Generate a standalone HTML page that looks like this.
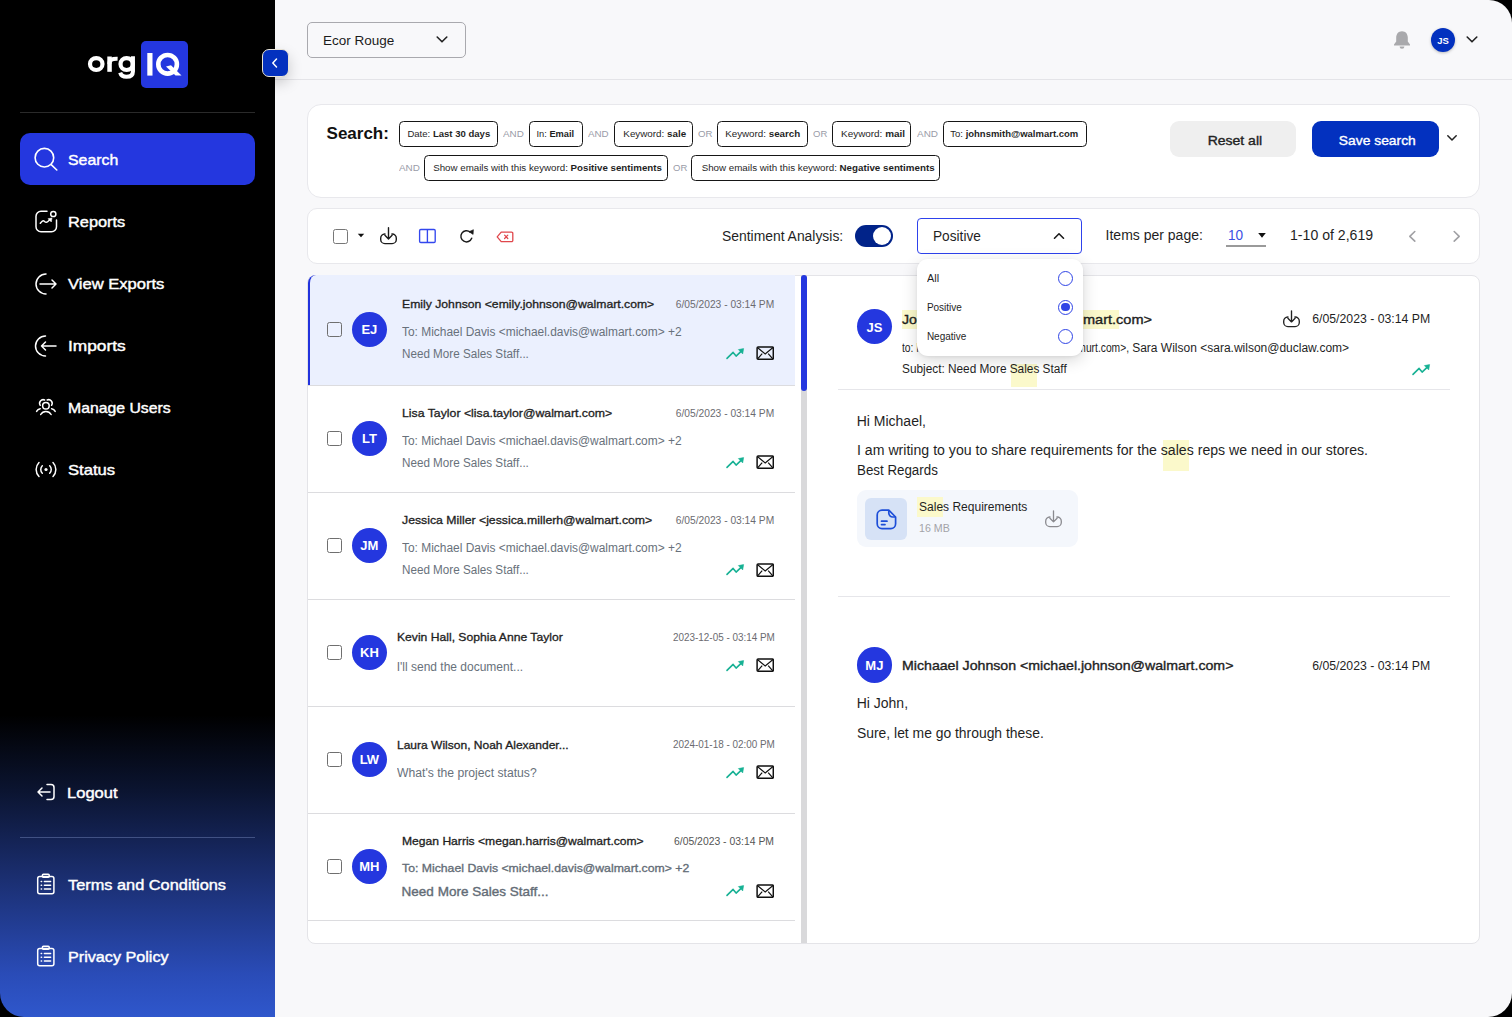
<!DOCTYPE html><html><head><meta charset="utf-8"><style>
*{margin:0;padding:0;box-sizing:border-box}
html,body{width:1512px;height:1017px;overflow:hidden;background:#000}
body{position:relative;font-family:"Liberation Sans",sans-serif}
.t{position:absolute;line-height:0;white-space:nowrap}
</style></head><body><div style="position:absolute;left:0px;top:0px;width:275px;height:1017px;background:linear-gradient(180deg,#000 0px,#000 715px,#0b1430 790px,#1b2f72 880px,#2a4cb8 975px,#2f57cc 1017px);border-bottom-left-radius:24px"></div><div style="position:absolute;left:275px;top:0px;width:1237px;height:1017px;background:#F8F8FA;border-top-right-radius:23px;border-bottom-right-radius:24px"></div><svg style="position:absolute;left:84px;top:50px;" width="56" height="32" viewBox="0 0 56 32" fill="none"><ellipse cx="12.25" cy="14.05" rx="6.25" ry="5.95" stroke="#fff" stroke-width="4.2"/><rect x="23.3" y="6.5" width="4.5" height="15.3" fill="#fff"/><path d="M25.4 14 C25.4 9.6 28 8.6 33.6 8.8" stroke="#fff" stroke-width="4"/><ellipse cx="42.6" cy="14.05" rx="6.1" ry="5.95" stroke="#fff" stroke-width="4.2"/><path d="M48.9 6.3 V21.5 C48.9 25.3 46.2 26.8 42.4 26.8 C39.2 26.8 37 25.4 36.2 22.6" stroke="#fff" stroke-width="4.1"/></svg><div style="position:absolute;left:141px;top:41px;width:47px;height:46.5px;background:#2437DF;border-radius:5px"></div><svg style="position:absolute;left:141px;top:41px;" width="47" height="47" viewBox="0 0 47 47" fill="none"><rect x="6.3" y="12" width="5.2" height="22.6" fill="#fff"/><circle cx="26.6" cy="23.3" r="9.3" stroke="#fff" stroke-width="4.6"/><path d="M25 25.5 L34.5 34.6 H40.5 L30 24.3 Z" fill="#fff"/></svg><div style="position:absolute;left:20px;top:112px;width:235px;height:1px;background:#2a2a2a"></div><div style="position:absolute;left:20px;top:133px;width:235px;height:52px;background:#2437DF;border-radius:10px"></div><svg style="position:absolute;left:33px;top:146px;" width="26" height="26" viewBox="0 0 26 26" fill="none"><circle cx="11.4" cy="11.7" r="9.3" stroke="#fff" stroke-width="1.6"/><path d="M18.2 18.6 L23.8 24" stroke="#fff" stroke-width="1.6" stroke-linecap="round"/></svg><div class="t" style="top:160.00px;font-size:15px;font-weight:400;color:#fff;-webkit-text-stroke:0.42px #fff;left:67.75px;transform-origin:0 0;transform:scaleX(1.0580);">Search</div><svg style="position:absolute;left:34px;top:209px;" width="24" height="24" viewBox="0 0 24 24" fill="none"><path d="M13 2.2 H7 A5 5 0 0 0 2 7.2 V17.7 A5 5 0 0 0 7 22.7 H17.5 A5 5 0 0 0 22.5 17.7 V11" stroke="#fff" stroke-width="1.5" stroke-linecap="round" stroke-linejoin="round"/><circle cx="19.3" cy="5" r="2.6" stroke="#fff" stroke-width="1.5" stroke-linecap="round" stroke-linejoin="round"/><path d="M6.3 14.3 C7.8 12.3 9 11.2 10.2 12.2 C11.4 13.3 12.2 14 13.6 12.8 L16.4 10.3" stroke="#fff" stroke-width="1.5" stroke-linecap="round" stroke-linejoin="round"/><path d="M18 9 L14 9.7 L17.3 13 Z" fill="#fff" stroke="#fff" stroke-width="0.5" stroke-linejoin="round"/></svg><div class="t" style="top:222.00px;font-size:15px;font-weight:400;color:#fff;-webkit-text-stroke:0.42px #fff;left:67.65px;transform-origin:0 0;transform:scaleX(1.0895);">Reports</div><svg style="position:absolute;left:34px;top:272px;" width="24" height="24" viewBox="0 0 24 24" fill="none"><path d="M12 2 A10 10 0 1 0 12 22" stroke="#fff" stroke-width="1.5" stroke-linecap="round" stroke-linejoin="round"/><path d="M6 12 H22 M18 8 L22 12 L18 16" stroke="#fff" stroke-width="1.5" stroke-linecap="round" stroke-linejoin="round"/></svg><div class="t" style="top:284.00px;font-size:15px;font-weight:400;color:#fff;-webkit-text-stroke:0.42px #fff;left:67.65px;transform-origin:0 0;transform:scaleX(1.1042);">View Exports</div><svg style="position:absolute;left:34px;top:334px;" width="24" height="24" viewBox="0 0 24 24" fill="none"><path d="M11.5 2 A10 10 0 1 0 11.5 22" stroke="#fff" stroke-width="1.5" stroke-linecap="round" stroke-linejoin="round"/><path d="M22 12 H7.5 M11.5 8 L7.5 12 L11.5 16" stroke="#fff" stroke-width="1.5" stroke-linecap="round" stroke-linejoin="round"/></svg><div class="t" style="top:346.00px;font-size:15px;font-weight:400;color:#fff;-webkit-text-stroke:0.42px #fff;left:67.65px;transform-origin:0 0;transform:scaleX(1.1543);">Imports</div><svg style="position:absolute;left:34px;top:397px;" width="24" height="22" viewBox="0 0 24 22" fill="none"><circle cx="11.9" cy="8.7" r="3.3" stroke="#fff" stroke-width="1.5" stroke-linecap="round" stroke-linejoin="round"/><path d="M6.22 8.31 A3.6 3.6 0 0 1 10.66 3.01 M17.58 8.31 A3.6 3.6 0 0 0 13.14 3.01 M6.7 17.5 A6 6 0 0 1 17.1 17.5 M2.6 14.4 A5 5 0 0 1 6.2 11.7 M21.2 14.4 A5 5 0 0 0 17.6 11.7" stroke="#fff" stroke-width="1.5" stroke-linecap="round" stroke-linejoin="round"/></svg><div class="t" style="top:408.00px;font-size:15px;font-weight:400;color:#fff;-webkit-text-stroke:0.42px #fff;left:67.65px;transform-origin:0 0;transform:scaleX(1.0516);">Manage Users</div><svg style="position:absolute;left:34px;top:459px;" width="24" height="22" viewBox="0 0 24 22" fill="none"><circle cx="12" cy="10.5" r="1.6" fill="#fff"/><path d="M8.3 6.8 A5.2 5.2 0 0 0 8.3 14.2 M15.7 6.8 A5.2 5.2 0 0 1 15.7 14.2" stroke="#fff" stroke-width="1.5" stroke-linecap="round" stroke-linejoin="round"/><path d="M5 3.5 A10 10 0 0 0 5 17.5 M19 3.5 A10 10 0 0 1 19 17.5" stroke="#fff" stroke-width="1.5" stroke-linecap="round" stroke-linejoin="round"/></svg><div class="t" style="top:470.00px;font-size:15px;font-weight:400;color:#fff;-webkit-text-stroke:0.42px #fff;left:67.65px;transform-origin:0 0;transform:scaleX(1.1089);">Status</div><svg style="position:absolute;left:34px;top:781px;" width="24" height="22" viewBox="0 0 24 22" fill="none"><path d="M13 3.5 H17 A3 3 0 0 1 20 6.5 V15.5 A3 3 0 0 1 17 18.5 H13" stroke="#fff" stroke-width="1.5" stroke-linecap="round" stroke-linejoin="round"/><path d="M16 11 H4 M8 7 L4 11 L8 15" stroke="#fff" stroke-width="1.5" stroke-linecap="round" stroke-linejoin="round"/></svg><div class="t" style="top:793.00px;font-size:15px;font-weight:400;color:#fff;-webkit-text-stroke:0.42px #fff;left:67.35px;transform-origin:0 0;transform:scaleX(1.1038);">Logout</div><div style="position:absolute;left:20px;top:837px;width:235px;height:1px;background:rgba(120,140,190,0.45)"></div><svg style="position:absolute;left:36px;top:873px;" width="21" height="23" viewBox="0 0 21 23" fill="none"><rect x="1.7" y="3.4" width="16.2" height="17.4" rx="2" stroke="#fff" stroke-width="1.5" stroke-linecap="round" stroke-linejoin="round"/><rect x="6.4" y="1.3" width="6.8" height="3" rx="1" stroke="#fff" stroke-width="1.5" stroke-linecap="round" stroke-linejoin="round"/><path d="M5.2 8.6 H5.6 M8.4 8.6 H14.6 M5.2 12.3 H5.6 M8.4 12.3 H14.6 M5.2 16 H5.6 M8.4 16 H14.6" stroke="#fff" stroke-width="1.5" stroke-linecap="round" stroke-linejoin="round"/></svg><div class="t" style="top:885.00px;font-size:15px;font-weight:400;color:#fff;-webkit-text-stroke:0.42px #fff;left:67.95px;transform-origin:0 0;transform:scaleX(1.0893);">Terms and Conditions</div><svg style="position:absolute;left:36px;top:945px;" width="21" height="23" viewBox="0 0 21 23" fill="none"><rect x="1.7" y="3.4" width="16.2" height="17.4" rx="2" stroke="#fff" stroke-width="1.5" stroke-linecap="round" stroke-linejoin="round"/><rect x="6.4" y="1.3" width="6.8" height="3" rx="1" stroke="#fff" stroke-width="1.5" stroke-linecap="round" stroke-linejoin="round"/><path d="M5.2 8.6 H5.6 M8.4 8.6 H14.6 M5.2 12.3 H5.6 M8.4 12.3 H14.6 M5.2 16 H5.6 M8.4 16 H14.6" stroke="#fff" stroke-width="1.5" stroke-linecap="round" stroke-linejoin="round"/></svg><div class="t" style="top:957.00px;font-size:15px;font-weight:400;color:#fff;-webkit-text-stroke:0.42px #fff;left:67.95px;transform-origin:0 0;transform:scaleX(1.0777);">Privacy Policy</div><div style="position:absolute;left:275px;top:79px;width:1237px;height:1px;background:#E4E4E8"></div><div style="position:absolute;left:307px;top:22px;width:159px;height:36px;border:1px solid #A9A9AE;border-radius:5px;background:#F8F8FA"></div><div class="t" style="top:41.00px;font-size:13.5px;font-weight:400;color:#1b1b1b;left:323.02px;transform-origin:0 0;">Ecor Rouge</div><svg style="position:absolute;left:435px;top:34px;" width="14" height="10" viewBox="0 0 14 10" fill="none"><path d="M2.2 3 L7 7.8 L11.8 3" stroke="#222" stroke-width="1.6" stroke-linecap="round" stroke-linejoin="round"/></svg><div style="position:absolute;left:261.5px;top:49px;width:27px;height:28px;border-radius:7px;background:#0331BF;border:1px solid #e9e4d6;box-shadow:0 6px 14px rgba(0,0,0,0.18)"></div><svg style="position:absolute;left:268px;top:55px;" width="14" height="16" viewBox="0 0 14 16" fill="none"><path d="M8.5 4 L4.8 8 L8.5 12" stroke="#fff" stroke-width="1.5" stroke-linecap="round" stroke-linejoin="round"/></svg><svg style="position:absolute;left:1392px;top:29px;" width="20" height="22" viewBox="0 0 20 22" fill="none"><path d="M10 2.2 C6.3 2.2 4.2 5 4.2 8.6 V12.6 L2 15.6 V16.6 H18 V15.6 L15.8 12.6 V8.6 C15.8 5 13.7 2.2 10 2.2 Z" fill="#A9A9AC"/><path d="M7.6 17.4 A2.4 2.4 0 0 0 12.4 17.4 Z" fill="#A9A9AC"/></svg><div style="position:absolute;left:1431px;top:28px;width:24px;height:24px;border-radius:50%;background:#0331BF;box-shadow:0 1px 3px rgba(0,0,0,0.25)"></div><div class="t" style="top:41.00px;font-size:9.5px;font-weight:700;color:#fff;left:1443.00px;transform-origin:0 0;transform:translateX(-50%) ;">JS</div><svg style="position:absolute;left:1465px;top:34px;" width="14" height="10" viewBox="0 0 14 10" fill="none"><path d="M2.2 3 L7 7.8 L11.8 3" stroke="#222" stroke-width="1.6" stroke-linecap="round" stroke-linejoin="round"/></svg><div style="position:absolute;left:307px;top:104px;width:1172.5px;height:94px;background:#fff;border:1px solid #E8E8EC;border-radius:14px"></div><div class="t" style="top:134.00px;font-size:17px;font-weight:700;color:#111;left:326.55px;transform-origin:0 0;">Search:</div><div style="position:absolute;left:399.4px;top:121.2px;width:98.40000000000003px;height:25.5px;border:1.2px solid #161616;border-radius:4.5px;background:#fff"></div><div class="t" style="top:134.00px;font-size:9.6px;font-weight:400;color:#1f1f1f;left:448.60px;transform-origin:0 0;transform:translateX(-50%) scaleX(0.9956);">Date: <b>Last 30 days</b></div><div class="t" style="top:134.00px;font-size:9.6px;font-weight:400;color:#9A9CA8;left:503.02px;transform-origin:0 0;transform:scaleX(1.0256);">AND</div><div style="position:absolute;left:529.4px;top:121.2px;width:53.200000000000045px;height:25.5px;border:1.2px solid #161616;border-radius:4.5px;background:#fff"></div><div class="t" style="top:134.00px;font-size:9.6px;font-weight:400;color:#1f1f1f;left:556.00px;transform-origin:0 0;transform:translateX(-50%) scaleX(0.9660);">In: <b>Email</b></div><div class="t" style="top:134.00px;font-size:9.6px;font-weight:400;color:#9A9CA8;left:587.82px;transform-origin:0 0;transform:scaleX(1.0204);">AND</div><div style="position:absolute;left:614.4px;top:121.2px;width:78.39999999999998px;height:25.5px;border:1.2px solid #161616;border-radius:4.5px;background:#fff"></div><div class="t" style="top:134.00px;font-size:9.6px;font-weight:400;color:#1f1f1f;left:653.60px;transform-origin:0 0;transform:translateX(-50%) scaleX(1.0248);">Keyword: <b>sale</b></div><div class="t" style="top:134.00px;font-size:9.6px;font-weight:400;color:#9A9CA8;left:697.52px;transform-origin:0 0;transform:scaleX(1.0052);">OR</div><div style="position:absolute;left:717.1px;top:121.2px;width:90.60000000000002px;height:25.5px;border:1.2px solid #161616;border-radius:4.5px;background:#fff"></div><div class="t" style="top:134.00px;font-size:9.6px;font-weight:400;color:#1f1f1f;left:762.40px;transform-origin:0 0;transform:translateX(-50%) scaleX(1.0200);">Keyword: <b>search</b></div><div class="t" style="top:134.00px;font-size:9.6px;font-weight:400;color:#9A9CA8;left:812.52px;transform-origin:0 0;transform:scaleX(0.9903);">OR</div><div style="position:absolute;left:832.1px;top:121.2px;width:79.39999999999998px;height:25.5px;border:1.2px solid #161616;border-radius:4.5px;background:#fff"></div><div class="t" style="top:134.00px;font-size:9.6px;font-weight:400;color:#1f1f1f;left:871.80px;transform-origin:0 0;transform:translateX(-50%) scaleX(1.0326);">Keyword: <b>mail</b></div><div class="t" style="top:134.00px;font-size:9.6px;font-weight:400;color:#9A9CA8;left:916.52px;transform-origin:0 0;transform:scaleX(1.0360);">AND</div><div style="position:absolute;left:943.3px;top:121.2px;width:143.4000000000001px;height:25.5px;border:1.2px solid #161616;border-radius:4.5px;background:#fff"></div><div class="t" style="top:134.00px;font-size:9.6px;font-weight:400;color:#1f1f1f;left:1015.00px;transform-origin:0 0;transform:translateX(-50%) scaleX(0.9887);">To: <b>johnsmith@walmart.com</b></div><div class="t" style="top:168.00px;font-size:9.6px;font-weight:400;color:#9A9CA8;left:398.72px;transform-origin:0 0;transform:scaleX(1.0308);">AND</div><div style="position:absolute;left:424.2px;top:155.1px;width:244.2px;height:25.5px;border:1.2px solid #161616;border-radius:4.5px;background:#fff"></div><div class="t" style="top:168.00px;font-size:9.6px;font-weight:400;color:#1f1f1f;left:546.30px;transform-origin:0 0;transform:translateX(-50%) scaleX(1.0139);">Show emails with this keyword: <b>Positive sentiments</b></div><div class="t" style="top:168.00px;font-size:9.6px;font-weight:400;color:#9A9CA8;left:672.52px;transform-origin:0 0;transform:scaleX(0.9903);">OR</div><div style="position:absolute;left:691.3px;top:155.1px;width:248.5px;height:25.5px;border:1.2px solid #161616;border-radius:4.5px;background:#fff"></div><div class="t" style="top:168.00px;font-size:9.6px;font-weight:400;color:#1f1f1f;left:815.55px;transform-origin:0 0;transform:translateX(-50%) scaleX(1.0185);">Show emails with this keyword: <b>Negative sentiments</b></div><div style="position:absolute;left:1170.2px;top:121px;width:126.3px;height:35.6px;background:#EFEFEF;border-radius:9px"></div><div class="t" style="top:141.00px;font-size:13px;font-weight:400;color:#222;-webkit-text-stroke:0.36px #222;left:1233.40px;transform-origin:0 0;transform:translateX(-50%) scaleX(1.0755);">Reset all</div><div style="position:absolute;left:1312px;top:121px;width:127px;height:35.6px;background:#0331BF;border-radius:9px"></div><div class="t" style="top:141.00px;font-size:13px;font-weight:400;color:#fff;-webkit-text-stroke:0.36px #fff;left:1375.20px;transform-origin:0 0;transform:translateX(-50%) scaleX(1.0639);">Save search</div><svg style="position:absolute;left:1445px;top:132px;" width="14" height="12" viewBox="0 0 14 12" fill="none"><path d="M2.8 3.8 L7 8 L11.2 3.8" stroke="#222" stroke-width="1.5" stroke-linecap="round" stroke-linejoin="round"/></svg><div style="position:absolute;left:307px;top:208.4px;width:1172.5px;height:55.6px;background:#fff;border:1px solid #E8E8EC;border-radius:10px"></div><div style="position:absolute;left:333.2px;top:228.9px;width:14.8px;height:14.8px;border:1.3px solid #777;border-radius:2.5px"></div><svg style="position:absolute;left:357px;top:233px;" width="8" height="5" viewBox="0 0 8 5" fill="none"><path d="M0.8 0.8 H7.2 L4 4.3 Z" fill="#111"/></svg><svg style="position:absolute;left:378px;top:226px;" width="20" height="20" viewBox="0 0 20 20" fill="none"><path d="M10.5 1.8 V12.8 M6.9 9.3 L10.5 12.9 L14.1 9.3" stroke="#1a1a1a" stroke-width="1.4" stroke-linecap="round" stroke-linejoin="round"/><path d="M7 8 H6.8 A4.2 4.2 0 0 0 2.7 12.2 V13.4 A4.2 4.2 0 0 0 6.9 17.6 H14.1 A4.2 4.2 0 0 0 18.3 13.4 V12.2 A4.2 4.2 0 0 0 14.1 8 H13.9" stroke="#1a1a1a" stroke-width="1.4" stroke-linecap="round"/></svg><svg style="position:absolute;left:418px;top:228px;" width="19" height="16" viewBox="0 0 19 16" fill="none"><rect x="1.6" y="1.5" width="15.6" height="13" rx="1.2" stroke="#3347EE" stroke-width="1.35"/><path d="M9.4 1.5 V14.5" stroke="#3347EE" stroke-width="1.35"/></svg><svg style="position:absolute;left:458px;top:228px;" width="17" height="16" viewBox="0 0 17 16" fill="none"><path d="M13.7 10.3 A5.6 5.6 0 1 1 12.2 4.1" stroke="#1a1a1a" stroke-width="1.45" stroke-linecap="round"/><path d="M11 3.7 L15.4 1.7 L15.1 6.4 Z" fill="#1a1a1a" stroke="#1a1a1a" stroke-width="0.6" stroke-linejoin="round"/></svg><svg style="position:absolute;left:496px;top:231px;" width="18" height="12" viewBox="0 0 18 12" fill="none"><path d="M5.2 1.2 H15.6 A1.2 1.2 0 0 1 16.8 2.4 V9.4 A1.2 1.2 0 0 1 15.6 10.6 H5.2 L1.2 5.9 Z" stroke="#E0474C" stroke-width="1.3" stroke-linejoin="round"/><path d="M8.6 4.1 L11.8 7.5 M11.8 4.1 L8.6 7.5" stroke="#E0474C" stroke-width="1.25" stroke-linecap="round"/></svg><div class="t" style="top:236.00px;font-size:14px;font-weight:400;color:#1f1f1f;left:721.90px;transform-origin:0 0;transform:scaleX(0.9920);">Sentiment Analysis:</div><div style="position:absolute;left:855.3px;top:225px;width:37.4px;height:22px;background:#012389;border-radius:11px"></div><div style="position:absolute;left:872.8px;top:226.9px;width:18.2px;height:18.2px;background:#fff;border-radius:50%"></div><div style="position:absolute;left:917.3px;top:218.3px;width:165.2px;height:35.8px;border:1.6px solid #2E42EC;border-radius:4px;background:#fff"></div><div class="t" style="top:236.00px;font-size:14px;font-weight:400;color:#1f1f1f;left:933.00px;transform-origin:0 0;transform:scaleX(0.9762);">Positive</div><svg style="position:absolute;left:1052px;top:231px;" width="14" height="10" viewBox="0 0 14 10" fill="none"><path d="M2.5 7.2 L7 2.8 L11.5 7.2" stroke="#1a1a1a" stroke-width="1.6" stroke-linecap="round" stroke-linejoin="round"/></svg><div class="t" style="top:235.00px;font-size:14px;font-weight:400;color:#1f1f1f;left:1105.60px;transform-origin:0 0;">Items per page:</div><div class="t" style="top:235.00px;font-size:14px;font-weight:400;color:#3B4FE4;left:1228.30px;transform-origin:0 0;transform:scaleX(0.9733);">10</div><svg style="position:absolute;left:1257px;top:232px;" width="10" height="7" viewBox="0 0 10 7" fill="none"><path d="M1.2 1 H8.8 L5 5.8 Z" fill="#111"/></svg><div style="position:absolute;left:1225.7px;top:245.2px;width:40.2px;height:1.5px;background:#9a9a9a"></div><div class="t" style="top:235.00px;font-size:14px;font-weight:400;color:#1f1f1f;left:1289.80px;transform-origin:0 0;transform:scaleX(1.0072);">1-10 of 2,619</div><svg style="position:absolute;left:1405px;top:229px;" width="14" height="15" viewBox="0 0 14 15" fill="none"><path d="M9.8 2.5 L4.8 7.3 L9.8 12.1" stroke="#A0A0A4" stroke-width="1.6" stroke-linecap="round" stroke-linejoin="round"/></svg><svg style="position:absolute;left:1450px;top:229px;" width="14" height="15" viewBox="0 0 14 15" fill="none"><path d="M4.2 2.5 L9.2 7.3 L4.2 12.1" stroke="#A0A0A4" stroke-width="1.6" stroke-linecap="round" stroke-linejoin="round"/></svg><div style="position:absolute;left:307px;top:274.8px;width:1172.5px;height:669px;background:#fff;border:1px solid #E4E4E8;border-radius:8px"></div><div style="position:absolute;left:307.5px;top:275px;width:487.5px;height:110.5px;background:#EBF0FE;border-top-left-radius:8px;border-left:2.6px solid #2233DD"></div><div style="position:absolute;left:308px;top:385.0px;width:487px;height:1.2px;background:#DCDCDF"></div><div style="position:absolute;left:308px;top:491.9px;width:487px;height:1.2px;background:#DCDCDF"></div><div style="position:absolute;left:308px;top:598.9px;width:487px;height:1.2px;background:#DCDCDF"></div><div style="position:absolute;left:308px;top:706.1px;width:487px;height:1.2px;background:#DCDCDF"></div><div style="position:absolute;left:308px;top:812.7px;width:487px;height:1.2px;background:#DCDCDF"></div><div style="position:absolute;left:308px;top:919.5px;width:487px;height:1.2px;background:#DCDCDF"></div><div style="position:absolute;left:801px;top:275px;width:6.2px;height:668px;background:#D9D9DB"></div><div style="position:absolute;left:801px;top:275px;width:6.2px;height:116px;background:#2437DF;border-radius:3px"></div><div style="position:absolute;left:327px;top:322px;width:14.8px;height:14.8px;border:1.3px solid #6f6f6f;border-radius:2.5px"></div><div style="position:absolute;left:351.79999999999995px;top:311.7px;width:35.2px;height:35.2px;background:#2437DF;border-radius:50%"></div><div class="t" style="top:330.00px;font-size:13px;font-weight:700;color:#fff;left:369.40px;transform-origin:0 0;transform:translateX(-50%) ;">EJ</div><div class="t" style="top:304.00px;font-size:11.5px;font-weight:400;color:#1f1f1f;-webkit-text-stroke:0.32px #1f1f1f;left:401.73px;transform-origin:0 0;transform:scaleX(1.0609);">Emily Johnson &lt;emily.johnson@walmart.com&gt;</div><div class="t" style="top:305.00px;font-size:10px;font-weight:400;color:#6b6b70;right:737.60px;transform-origin:100% 0;transform:scaleX(1.0232);">6/05/2023 - 03:14 PM</div><div class="t" style="top:332.00px;font-size:12px;font-weight:400;color:#68717B;left:401.70px;transform-origin:0 0;transform:scaleX(0.9939);">To: Michael Davis &lt;michael.davis@walmart.com&gt; +2</div><div class="t" style="top:354.00px;font-size:12px;font-weight:400;color:#68717B;left:401.70px;transform-origin:0 0;transform:scaleX(0.9720);">Need More Sales Staff...</div><svg style="position:absolute;left:725px;top:347px;" width="20" height="14" viewBox="0 0 20 14" fill="none"><path d="M2 11.4 L8.1 5.4 L11.1 9.1 L16.6 3.9" stroke="#17B194" stroke-width="1.6" stroke-linecap="round" stroke-linejoin="round"/><path d="M18.6 1.6 L13.4 2.6 L17.7 6.9 Z" fill="#17B194" stroke="#17B194" stroke-width="0.6" stroke-linejoin="round"/></svg><svg style="position:absolute;left:755.6px;top:346.3px;" width="18.4" height="14.4" viewBox="0 0 18.4 14.4" fill="none"><rect x="1.1" y="1.1" width="16.2" height="12.2" rx="1" stroke="#111" stroke-width="1.5"/><path d="M1.4 1.5 L9.2 7.9 L17 1.5 M1.6 12.8 L6.2 7.6 M16.8 12.8 L12.2 7.6" stroke="#111" stroke-width="1.2"/></svg><div style="position:absolute;left:327px;top:431px;width:14.8px;height:14.8px;border:1.3px solid #6f6f6f;border-radius:2.5px"></div><div style="position:absolute;left:351.79999999999995px;top:420.7px;width:35.2px;height:35.2px;background:#2437DF;border-radius:50%"></div><div class="t" style="top:439.00px;font-size:13px;font-weight:700;color:#fff;left:369.40px;transform-origin:0 0;transform:translateX(-50%) ;">LT</div><div class="t" style="top:413.00px;font-size:11.5px;font-weight:400;color:#1f1f1f;-webkit-text-stroke:0.32px #1f1f1f;left:401.73px;transform-origin:0 0;transform:scaleX(1.0682);">Lisa Taylor &lt;lisa.taylor@walmart.com&gt;</div><div class="t" style="top:414.00px;font-size:10px;font-weight:400;color:#6b6b70;right:737.60px;transform-origin:100% 0;transform:scaleX(1.0232);">6/05/2023 - 03:14 PM</div><div class="t" style="top:441.00px;font-size:12px;font-weight:400;color:#68717B;left:401.70px;transform-origin:0 0;transform:scaleX(0.9939);">To: Michael Davis &lt;michael.davis@walmart.com&gt; +2</div><div class="t" style="top:463.00px;font-size:12px;font-weight:400;color:#68717B;left:401.70px;transform-origin:0 0;transform:scaleX(0.9720);">Need More Sales Staff...</div><svg style="position:absolute;left:725px;top:456px;" width="20" height="14" viewBox="0 0 20 14" fill="none"><path d="M2 11.4 L8.1 5.4 L11.1 9.1 L16.6 3.9" stroke="#17B194" stroke-width="1.6" stroke-linecap="round" stroke-linejoin="round"/><path d="M18.6 1.6 L13.4 2.6 L17.7 6.9 Z" fill="#17B194" stroke="#17B194" stroke-width="0.6" stroke-linejoin="round"/></svg><svg style="position:absolute;left:755.6px;top:455.3px;" width="18.4" height="14.4" viewBox="0 0 18.4 14.4" fill="none"><rect x="1.1" y="1.1" width="16.2" height="12.2" rx="1" stroke="#111" stroke-width="1.5"/><path d="M1.4 1.5 L9.2 7.9 L17 1.5 M1.6 12.8 L6.2 7.6 M16.8 12.8 L12.2 7.6" stroke="#111" stroke-width="1.2"/></svg><div style="position:absolute;left:327px;top:538.2px;width:14.8px;height:14.8px;border:1.3px solid #6f6f6f;border-radius:2.5px"></div><div style="position:absolute;left:351.79999999999995px;top:527.9px;width:35.2px;height:35.2px;background:#2437DF;border-radius:50%"></div><div class="t" style="top:546.00px;font-size:13px;font-weight:700;color:#fff;left:369.40px;transform-origin:0 0;transform:translateX(-50%) ;">JM</div><div class="t" style="top:520.00px;font-size:11.5px;font-weight:400;color:#1f1f1f;-webkit-text-stroke:0.32px #1f1f1f;left:401.73px;transform-origin:0 0;transform:scaleX(1.0661);">Jessica Miller &lt;jessica.millerh@walmart.com&gt;</div><div class="t" style="top:521.00px;font-size:10px;font-weight:400;color:#6b6b70;right:737.60px;transform-origin:100% 0;transform:scaleX(1.0232);">6/05/2023 - 03:14 PM</div><div class="t" style="top:548.00px;font-size:12px;font-weight:400;color:#68717B;left:401.70px;transform-origin:0 0;transform:scaleX(0.9939);">To: Michael Davis &lt;michael.davis@walmart.com&gt; +2</div><div class="t" style="top:570.00px;font-size:12px;font-weight:400;color:#68717B;left:401.70px;transform-origin:0 0;transform:scaleX(0.9720);">Need More Sales Staff...</div><svg style="position:absolute;left:725px;top:563.2px;" width="20" height="14" viewBox="0 0 20 14" fill="none"><path d="M2 11.4 L8.1 5.4 L11.1 9.1 L16.6 3.9" stroke="#17B194" stroke-width="1.6" stroke-linecap="round" stroke-linejoin="round"/><path d="M18.6 1.6 L13.4 2.6 L17.7 6.9 Z" fill="#17B194" stroke="#17B194" stroke-width="0.6" stroke-linejoin="round"/></svg><svg style="position:absolute;left:755.6px;top:562.5px;" width="18.4" height="14.4" viewBox="0 0 18.4 14.4" fill="none"><rect x="1.1" y="1.1" width="16.2" height="12.2" rx="1" stroke="#111" stroke-width="1.5"/><path d="M1.4 1.5 L9.2 7.9 L17 1.5 M1.6 12.8 L6.2 7.6 M16.8 12.8 L12.2 7.6" stroke="#111" stroke-width="1.2"/></svg><div style="position:absolute;left:327px;top:645.4px;width:14.8px;height:14.8px;border:1.3px solid #6f6f6f;border-radius:2.5px"></div><div style="position:absolute;left:351.79999999999995px;top:634.5px;width:35.2px;height:35.2px;background:#2437DF;border-radius:50%"></div><div class="t" style="top:653.00px;font-size:13px;font-weight:700;color:#fff;left:369.40px;transform-origin:0 0;transform:translateX(-50%) ;">KH</div><div class="t" style="top:637.00px;font-size:11.5px;font-weight:400;color:#1f1f1f;-webkit-text-stroke:0.32px #1f1f1f;left:396.73px;transform-origin:0 0;transform:scaleX(1.0551);">Kevin Hall, Sophia Anne Taylor</div><div class="t" style="top:638.00px;font-size:10px;font-weight:400;color:#6b6b70;right:737.60px;transform-origin:100% 0;transform:scaleX(0.9898);">2023-12-05 - 03:14 PM</div><div class="t" style="top:667.00px;font-size:12px;font-weight:400;color:#68717B;left:396.70px;transform-origin:0 0;">I'll send the document...</div><svg style="position:absolute;left:725px;top:659px;" width="20" height="14" viewBox="0 0 20 14" fill="none"><path d="M2 11.4 L8.1 5.4 L11.1 9.1 L16.6 3.9" stroke="#17B194" stroke-width="1.6" stroke-linecap="round" stroke-linejoin="round"/><path d="M18.6 1.6 L13.4 2.6 L17.7 6.9 Z" fill="#17B194" stroke="#17B194" stroke-width="0.6" stroke-linejoin="round"/></svg><svg style="position:absolute;left:755.6px;top:658.3px;" width="18.4" height="14.4" viewBox="0 0 18.4 14.4" fill="none"><rect x="1.1" y="1.1" width="16.2" height="12.2" rx="1" stroke="#111" stroke-width="1.5"/><path d="M1.4 1.5 L9.2 7.9 L17 1.5 M1.6 12.8 L6.2 7.6 M16.8 12.8 L12.2 7.6" stroke="#111" stroke-width="1.2"/></svg><div style="position:absolute;left:327px;top:752.4px;width:14.8px;height:14.8px;border:1.3px solid #6f6f6f;border-radius:2.5px"></div><div style="position:absolute;left:351.79999999999995px;top:741.6999999999999px;width:35.2px;height:35.2px;background:#2437DF;border-radius:50%"></div><div class="t" style="top:760.00px;font-size:13px;font-weight:700;color:#fff;left:369.40px;transform-origin:0 0;transform:translateX(-50%) ;">LW</div><div class="t" style="top:745.00px;font-size:11.5px;font-weight:400;color:#1f1f1f;-webkit-text-stroke:0.32px #1f1f1f;left:396.73px;transform-origin:0 0;transform:scaleX(1.0451);">Laura Wilson, Noah Alexander...</div><div class="t" style="top:745.00px;font-size:10px;font-weight:400;color:#6b6b70;right:737.60px;transform-origin:100% 0;transform:scaleX(0.9898);">2024-01-18 - 02:00 PM</div><div class="t" style="top:773.00px;font-size:12px;font-weight:400;color:#68717B;left:396.70px;transform-origin:0 0;transform:scaleX(1.0146);">What's the project status?</div><svg style="position:absolute;left:725px;top:766px;" width="20" height="14" viewBox="0 0 20 14" fill="none"><path d="M2 11.4 L8.1 5.4 L11.1 9.1 L16.6 3.9" stroke="#17B194" stroke-width="1.6" stroke-linecap="round" stroke-linejoin="round"/><path d="M18.6 1.6 L13.4 2.6 L17.7 6.9 Z" fill="#17B194" stroke="#17B194" stroke-width="0.6" stroke-linejoin="round"/></svg><svg style="position:absolute;left:755.6px;top:765.4px;" width="18.4" height="14.4" viewBox="0 0 18.4 14.4" fill="none"><rect x="1.1" y="1.1" width="16.2" height="12.2" rx="1" stroke="#111" stroke-width="1.5"/><path d="M1.4 1.5 L9.2 7.9 L17 1.5 M1.6 12.8 L6.2 7.6 M16.8 12.8 L12.2 7.6" stroke="#111" stroke-width="1.2"/></svg><div style="position:absolute;left:327px;top:858.9px;width:14.8px;height:14.8px;border:1.3px solid #6f6f6f;border-radius:2.5px"></div><div style="position:absolute;left:351.79999999999995px;top:848.9px;width:35.2px;height:35.2px;background:#2437DF;border-radius:50%"></div><div class="t" style="top:867.00px;font-size:13px;font-weight:700;color:#fff;left:369.40px;transform-origin:0 0;transform:translateX(-50%) ;">MH</div><div class="t" style="top:841.00px;font-size:11.5px;font-weight:400;color:#1f1f1f;-webkit-text-stroke:0.32px #1f1f1f;left:401.73px;transform-origin:0 0;transform:scaleX(1.0526);">Megan Harris &lt;megan.harris@walmart.com&gt;</div><div class="t" style="top:841.00px;font-size:10.5px;font-weight:400;color:#555;right:737.58px;transform-origin:100% 0;transform:scaleX(0.9905);">6/05/2023 - 03:14 PM</div><div class="t" style="top:868.00px;font-size:11.5px;font-weight:400;color:#636C76;-webkit-text-stroke:0.32px #636C76;left:401.73px;transform-origin:0 0;transform:scaleX(1.0655);">To: Michael Davis &lt;michael.davis@walmart.com&gt; +2</div><div class="t" style="top:892.00px;font-size:13.5px;font-weight:400;color:#636C76;-webkit-text-stroke:0.38px #636C76;left:401.62px;transform-origin:0 0;">Need More Sales Staff...</div><svg style="position:absolute;left:725px;top:883.8px;" width="20" height="14" viewBox="0 0 20 14" fill="none"><path d="M2 11.4 L8.1 5.4 L11.1 9.1 L16.6 3.9" stroke="#17B194" stroke-width="1.6" stroke-linecap="round" stroke-linejoin="round"/><path d="M18.6 1.6 L13.4 2.6 L17.7 6.9 Z" fill="#17B194" stroke="#17B194" stroke-width="0.6" stroke-linejoin="round"/></svg><svg style="position:absolute;left:755.6px;top:883.5px;" width="18.4" height="14.4" viewBox="0 0 18.4 14.4" fill="none"><rect x="1.1" y="1.1" width="16.2" height="12.2" rx="1" stroke="#111" stroke-width="1.5"/><path d="M1.4 1.5 L9.2 7.9 L17 1.5 M1.6 12.8 L6.2 7.6 M16.8 12.8 L12.2 7.6" stroke="#111" stroke-width="1.2"/></svg><div style="position:absolute;left:856.9px;top:309.2px;width:35.2px;height:35.2px;background:#2437DF;border-radius:50%"></div><div class="t" style="top:328.00px;font-size:13px;font-weight:700;color:#fff;left:874.50px;transform-origin:0 0;transform:translateX(-50%) ;">JS</div><div style="position:absolute;left:901.9px;top:309.8px;width:217.1px;height:19.4px;background:#FBF9CB"></div><div class="t" style="top:320.00px;font-size:13.3px;font-weight:400;color:#1f1f1f;-webkit-text-stroke:0.37px #1f1f1f;left:901.63px;transform-origin:0 0;transform:scaleX(1.0658);">John Smith &lt;johnsmith@wal</div><div class="t" style="top:320.00px;font-size:13.3px;font-weight:400;color:#1f1f1f;-webkit-text-stroke:0.37px #1f1f1f;left:1083.34px;transform-origin:0 0;transform:scaleX(1.0928);">mart.com&gt;</div><svg style="position:absolute;left:1281px;top:309.2px;" width="20" height="20" viewBox="0 0 20 20" fill="none"><path d="M10.5 1.8 V12.8 M6.9 9.3 L10.5 12.9 L14.1 9.3" stroke="#222" stroke-width="1.35" stroke-linecap="round" stroke-linejoin="round"/><path d="M7 8 H6.8 A4.2 4.2 0 0 0 2.7 12.2 V13.4 A4.2 4.2 0 0 0 6.9 17.6 H14.1 A4.2 4.2 0 0 0 18.3 13.4 V12.2 A4.2 4.2 0 0 0 14.1 8 H13.9" stroke="#222" stroke-width="1.35" stroke-linecap="round"/></svg><div class="t" style="top:319.00px;font-size:12.5px;font-weight:400;color:#1f1f1f;right:82.08px;transform-origin:100% 0;transform:scaleX(0.9816);">6/05/2023 - 03:14 PM</div><div class="t" style="top:348.00px;font-size:12px;font-weight:400;color:#1f1f1f;left:901.70px;transform-origin:0 0;transform:scaleX(0.8569);">to: Michael Davis &lt;michael.davis@walmurt.com&gt;,</div><div class="t" style="top:348.00px;font-size:12px;font-weight:400;color:#1f1f1f;left:1132.20px;transform-origin:0 0;">Sara Wilson &lt;sara.wilson@duclaw.com&gt;</div><div style="position:absolute;left:1010.8px;top:364px;width:26.4px;height:22.6px;background:#FBF9CB"></div><div class="t" style="top:369.00px;font-size:12px;font-weight:400;color:#1f1f1f;left:901.70px;transform-origin:0 0;transform:scaleX(0.9849);">Subject: Need More Sales Staff</div><svg style="position:absolute;left:1410.5px;top:362.5px;" width="20" height="14" viewBox="0 0 20 14" fill="none"><path d="M2 11.4 L8.1 5.4 L11.1 9.1 L16.6 3.9" stroke="#17B194" stroke-width="1.6" stroke-linecap="round" stroke-linejoin="round"/><path d="M18.6 1.6 L13.4 2.6 L17.7 6.9 Z" fill="#17B194" stroke="#17B194" stroke-width="0.6" stroke-linejoin="round"/></svg><div style="position:absolute;left:838px;top:389px;width:612px;height:1.2px;background:#E6E6EA"></div><div class="t" style="top:421.00px;font-size:14px;font-weight:400;color:#1f1f1f;left:856.70px;transform-origin:0 0;">Hi Michael,</div><div style="position:absolute;left:1162.6px;top:440.2px;width:26.2px;height:30.6px;background:#FBF9CB"></div><div class="t" style="top:450.00px;font-size:14px;font-weight:400;color:#1f1f1f;left:856.70px;transform-origin:0 0;transform:scaleX(1.0088);">I am writing to you to share requirements for the sales reps we need in our stores.</div><div class="t" style="top:470.00px;font-size:14px;font-weight:400;color:#1f1f1f;left:856.70px;transform-origin:0 0;transform:scaleX(0.9529);">Best Regards</div><div style="position:absolute;left:857px;top:489.8px;width:221px;height:57.7px;background:#F4F7FC;border-radius:9px"></div><div style="position:absolute;left:864.8px;top:497.7px;width:42.1px;height:41.9px;background:#D6E2F6;border-radius:6px"></div><svg style="position:absolute;left:875px;top:508px;" width="23" height="23" viewBox="0 0 23 23" fill="none"><path d="M13.8 2.2 H7 A4.8 4.8 0 0 0 2.2 7 V15.8 A4.8 4.8 0 0 0 7 20.6 H15.8 A4.8 4.8 0 0 0 20.6 15.8 V9 Z" stroke="#1D4ED8" stroke-width="1.7" stroke-linejoin="round"/><path d="M13.8 2.2 V5 A4 4 0 0 0 17.8 9 H20.6" stroke="#1D4ED8" stroke-width="1.7" stroke-linejoin="round"/><path d="M6.5 13.2 H12 M6.5 16.6 H10" stroke="#1D4ED8" stroke-width="1.7" stroke-linecap="round"/></svg><div style="position:absolute;left:916.9px;top:496.6px;width:26.1px;height:20px;background:#FBF9CB"></div><div class="t" style="top:507.00px;font-size:12.5px;font-weight:400;color:#1f1f1f;left:918.67px;transform-origin:0 0;transform:scaleX(0.9622);">Sales Requirements</div><div class="t" style="top:528.00px;font-size:10.5px;font-weight:400;color:#A3A3A8;left:918.77px;transform-origin:0 0;transform:scaleX(1.0133);">16 MB</div><svg style="position:absolute;left:1043px;top:509.2px;" width="20" height="20" viewBox="0 0 20 20" fill="none"><path d="M10.5 1.8 V12.8 M6.9 9.3 L10.5 12.9 L14.1 9.3" stroke="#8a8a8f" stroke-width="1.3" stroke-linecap="round" stroke-linejoin="round"/><path d="M7 8 H6.8 A4.2 4.2 0 0 0 2.7 12.2 V13.4 A4.2 4.2 0 0 0 6.9 17.6 H14.1 A4.2 4.2 0 0 0 18.3 13.4 V12.2 A4.2 4.2 0 0 0 14.1 8 H13.9" stroke="#8a8a8f" stroke-width="1.3" stroke-linecap="round"/></svg><div style="position:absolute;left:838px;top:596px;width:612px;height:1.2px;background:#E6E6EA"></div><div style="position:absolute;left:856.8px;top:647.4px;width:35.2px;height:35.2px;background:#2437DF;border-radius:50%"></div><div class="t" style="top:666.00px;font-size:13px;font-weight:700;color:#fff;left:874.40px;transform-origin:0 0;transform:translateX(-50%) ;">MJ</div><div class="t" style="top:666.00px;font-size:13px;font-weight:400;color:#1f1f1f;-webkit-text-stroke:0.36px #1f1f1f;left:901.95px;transform-origin:0 0;transform:scaleX(1.0887);">Michaael Johnson &lt;michael.johnson@walmart.com&gt;</div><div class="t" style="top:666.00px;font-size:12.5px;font-weight:400;color:#1f1f1f;right:82.08px;transform-origin:100% 0;transform:scaleX(0.9816);">6/05/2023 - 03:14 PM</div><div class="t" style="top:703.00px;font-size:14px;font-weight:400;color:#1f1f1f;left:856.70px;transform-origin:0 0;">Hi John,</div><div class="t" style="top:733.00px;font-size:14px;font-weight:400;color:#1f1f1f;left:856.70px;transform-origin:0 0;transform:scaleX(0.9917);">Sure, let me go through these.</div><div style="position:absolute;left:917.4px;top:258.7px;width:165.4px;height:97.2px;background:#fff;border-radius:11px;box-shadow:0 4px 16px rgba(0,0,0,0.16),0 1px 3px rgba(0,0,0,0.06)"></div><div class="t" style="top:279.00px;font-size:10px;font-weight:400;color:#1f1f1f;left:926.90px;transform-origin:0 0;transform:scaleX(1.0864);">All</div><div style="position:absolute;left:1058px;top:270.7px;width:15px;height:15px;border:1.2px solid #2F44E6;border-radius:50%;background:#fff"></div><div class="t" style="top:308.00px;font-size:10px;font-weight:400;color:#1f1f1f;left:926.90px;transform-origin:0 0;">Positive</div><div style="position:absolute;left:1058px;top:299.8px;width:15px;height:15px;border:1.2px solid #2F44E6;border-radius:50%;background:#fff"></div><div style="position:absolute;left:1061.3px;top:303.1px;width:8.4px;height:8.4px;background:#2F44E6;border-radius:50%"></div><div class="t" style="top:337.00px;font-size:10px;font-weight:400;color:#1f1f1f;left:926.90px;transform-origin:0 0;">Negative</div><div style="position:absolute;left:1058px;top:328.9px;width:15px;height:15px;border:1.2px solid #2F44E6;border-radius:50%;background:#fff"></div></body></html>
